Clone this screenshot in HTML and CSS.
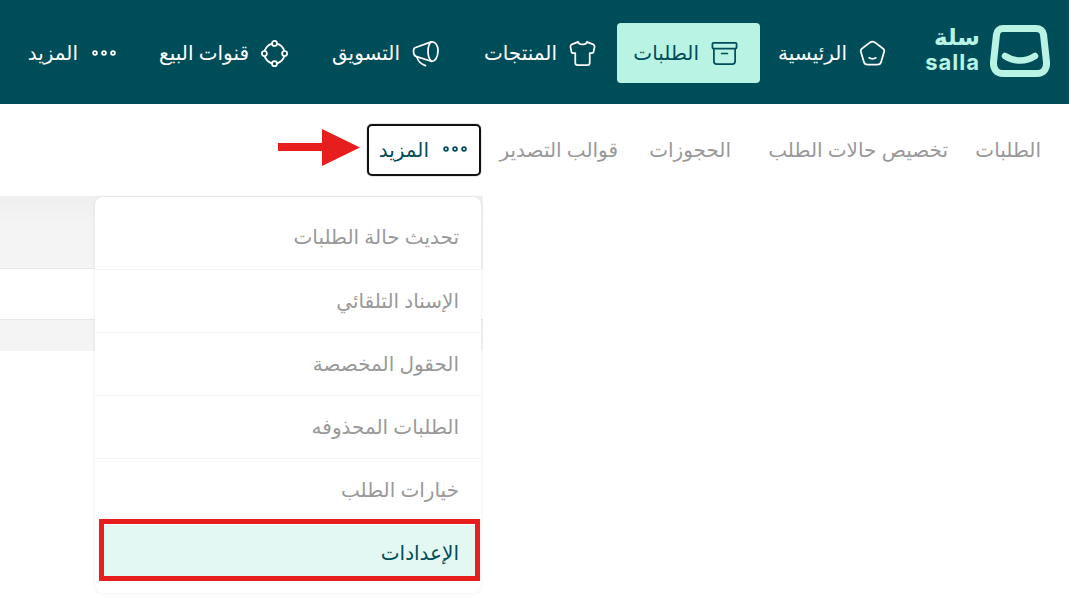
FILE: index.html
```html
<!DOCTYPE html>
<html lang="ar" dir="rtl">
<head>
<meta charset="utf-8">
<title>سلة</title>
<link rel="stylesheet" href="styles.css">
</head>
<body>
<div class="page">
  <header class="topbar">
    <a class="brand">
      <svg class="brand-mark" viewBox="0 0 62 52" width="62" height="52" fill="none" stroke="#b9f3e4" stroke-linecap="round" stroke-linejoin="round">
        <path d="M14 3.500H47C51 3.500 54 5.500 54.500 9.500L57.500 37C58 44 54.500 48.500 48 48.500H14C7.500 48.500 4 44 4.500 37L7.500 9.500C8 5.500 11 3.500 14 3.500Z" stroke-width="7"/>
        <path d="M16 31C25 37 37 37 46 31" stroke-width="6.500"/>
      </svg>
      <span class="brand-text"><span class="brand-ar">سلة</span><span class="brand-en" dir="ltr">salla</span></span>
    </a>
    <nav class="nav">
      <a class="nav-item w-home">
        <svg class="ico" viewBox="0 0 28 28" fill="none" stroke="currentColor" stroke-width="1.800" stroke-linejoin="round" stroke-linecap="round"><path d="M11.500 2.500C13 1.500 15 1.500 16.500 2.500L24.500 8.500C26 9.500 26.500 11 26 12.500L23 22.500C22.500 24.500 21 25.500 19 25.500H9C7 25.500 5.500 24.500 5 22.500L2 12.500C1.500 11 2 9.500 3.500 8.500Z"/><path d="M10.500 18.500C13 20 15 20 17.500 18.500"/></svg>
        <span>الرئيسية</span>
      </a>
      <a class="nav-item nav-active w-orders">
        <svg class="ico" viewBox="0 0 28 28" fill="none" stroke="currentColor" stroke-width="1.800" stroke-linejoin="round" stroke-linecap="round"><rect x="1.500" y="3" width="25" height="6" rx="1"/><path d="M3 9V22C3 24 4.500 25 6 25H22C23.500 25 25 24 25 22V9"/><path d="M11 14H17"/></svg>
        <span>الطلبات</span>
      </a>
      <a class="nav-item w-products">
        <svg class="ico" viewBox="0 0 28 28" fill="none" stroke="currentColor" stroke-width="1.800" stroke-linejoin="round" stroke-linecap="round"><path d="M9.500 2C10 5.500 18 5.500 18.500 2L25 4.500C26 5 26.500 6 26.500 7L25.500 12C25.500 13 24.500 13.500 23.500 13.500H21.500V23.500C21.500 25 20.500 26 19 26H9C7.500 26 6.500 25 6.500 23.500V13.500H4.500C3.500 13.500 2.500 13 2.500 12L1.500 7C1.500 6 2 5 3 4.500Z"/></svg>
        <span>المنتجات</span>
      </a>
      <a class="nav-item w-marketing">
        <svg class="ico" viewBox="0 0 28 28" fill="none" stroke="currentColor" stroke-width="1.800" stroke-linejoin="round" stroke-linecap="round"><path d="M3 8L20 2C24 1 27 6 27 11C27 17 24 23 20 22L4 17C1 16 1 9 3 8Z"/><path d="M20 2C16 5 15 17 20 22"/><path d="M5 17.500C6 21 9 25 14 26.500"/></svg>
        <span>التسويق</span>
      </a>
      <a class="nav-item w-channels">
        <svg class="ico" viewBox="0 0 28 28" fill="#004d5a" stroke="currentColor" stroke-width="1.800"><circle cx="14" cy="14" r="10.500"/><circle cx="14" cy="3.500" r="2.600"/><circle cx="24.500" cy="14" r="2.600"/><circle cx="14" cy="24.500" r="2.600"/><circle cx="3.500" cy="14" r="2.600"/></svg>
        <span>قنوات البيع</span>
      </a>
      <a class="nav-item w-more">
        <svg class="ico-dots" viewBox="0 0 24 6" fill="none" stroke="currentColor" stroke-width="1.800"><circle cx="3" cy="3" r="1.900"/><circle cx="12" cy="3" r="1.900"/><circle cx="21" cy="3" r="1.900"/></svg>
        <span>المزيد</span>
      </a>
    </nav>
  </header>

  <div class="tabs">
    <a class="tab w-t1">الطلبات</a>
    <a class="tab w-t2">تخصيص حالات الطلب</a>
    <a class="tab w-t3">الحجوزات</a>
    <a class="tab w-t4">قوالب التصدير</a>
    <a class="tab-more">
      <svg class="ico-dots" viewBox="0 0 24 6" fill="none" stroke="currentColor" stroke-width="1.800"><circle cx="3" cy="3" r="1.900"/><circle cx="12" cy="3" r="1.900"/><circle cx="21" cy="3" r="1.900"/></svg>
      <span>المزيد</span>
    </a>
    <svg class="arrow" viewBox="0 0 82 37" width="82" height="37"><path d="M0 14H44V0L82 18.500L44 37V22H0Z" fill="#e71e1e"/></svg>
  </div>

  <main class="content">
    <div class="table-bg">
      <div class="tr tr-head"></div>
      <div class="tr tr-body"></div>
      <div class="tr tr-foot"></div>
    </div>
    <div class="menu">
      <a class="menu-item menu-first">تحديث حالة الطلبات</a>
      <a class="menu-item">الإسناد التلقائي</a>
      <a class="menu-item">الحقول المخصصة</a>
      <a class="menu-item">الطلبات المحذوفه</a>
      <a class="menu-item menu-plain">خيارات الطلب</a>
      <a class="menu-item menu-active">الإعدادات</a>
      <span class="highlight"></span>
    </div>
  </main>
</div>
</body>
</html>
```
FILE: styles.css
```css
* { box-sizing: border-box; }
html, body { margin: 0; padding: 0; background: #fff; }
body { font-family: "Noto Sans", "DejaVu Sans", sans-serif; height: 598px; overflow: hidden; }
a { color: inherit; text-decoration: none; }
.page { width: 1069px; margin-right: 5px; }

.topbar {
  height: 104px;
  background: #004d5a;
  color: #fff;
  display: flex;
  align-items: center;
  padding-right: 18px;
}
.brand { display: flex; align-items: center; gap: 9px; width: 165px; flex: none; }
.brand-mark { display: block; margin-top: -2px; }
.brand-text { display: flex; flex-direction: column; color: #b9f3e4; align-items: flex-start; margin-top: -8px; }
.brand-ar { font-size: 23px; font-weight: 700; line-height: 24px; }
.brand-en { font-family: Inter, sans-serif; font-size: 22px; font-weight: 700; line-height: 22px; letter-spacing: 1px; margin-top: 3px; }

.nav { display: flex; align-items: center; flex: 1; }
.nav-item {
  display: flex;
  align-items: center;
  gap: 12px;
  height: 60px;
  font-size: 20px;
  font-weight: 500;
  white-space: nowrap;
  flex: none;
  margin-top: 2px;
}
.nav-item span { margin-top: -2px; }
.nav-active { background: #b9f3e4; color: #004d5a; border-radius: 4px; padding-right: 22px; }
.w-home { width: 126px; }
.w-orders { width: 143px; margin-left: 21px; }
.w-products { width: 157px; }
.w-marketing { width: 151px; }
.w-channels { width: 172px; }
.w-more { width: 100px; gap: 14px; }
.ico { width: 27px; height: 27px; flex: none; }
.ico-dots { width: 24px; height: 6px; flex: none; }

.tabs {
  position: relative;
  height: 92px;
  display: flex;
  align-items: center;
  padding-right: 28px;
  color: #999;
  font-size: 20px;
}
.tab { flex: none; white-space: nowrap; padding-bottom: 2px; }
.w-t1 { width: 93px; }
.w-t2 { width: 217px; }
.w-t3 { width: 113px; }
.w-t4 { width: 137px; }
.tab-more {
  display: flex;
  align-items: center;
  gap: 14px;
  width: 114px;
  height: 52px;
  padding: 0 12px 2px;
  border: 2px solid #111;
  border-radius: 5px;
  box-shadow: 0 0 1px #111;
  color: #004d5a;
  flex: none;
}
.arrow { position: absolute; left: 278px; top: 25px; }

.content { position: relative; height: 402px; }
.table-bg { width: 483px; margin-right: auto; }
.tr { border-bottom: 1px solid #e8e8e8; }
.tr-head { height: 73px; background: linear-gradient(#efefef, #f4f4f4 40%); }
.tr-body { height: 51px; background: #fff; }
.tr-foot { height: 31px; background: #f4f4f4; border-bottom: 0; }

.menu {
  position: absolute;
  left: 95px;
  top: 1px;
  width: 386px;
  height: 396px;
  background: #fff;
  border-radius: 8px;
  box-shadow: 0 0 4px rgba(0, 0, 0, .08);
  overflow: hidden;
}
.menu-item {
  display: flex;
  align-items: center;
  height: 63px;
  padding: 0 22px 2px;
  font-size: 20px;
  color: #999;
  border-bottom: 1px solid #f4f4f4;
}
.menu-first { height: 73px; padding-top: 9px; }
.menu-plain { border-bottom: 0; }
.menu-active { background: #e4f8f3; color: #004d5a; border-bottom: 0; height: 56px; margin: 3px 4px 0; padding: 0 18px 2px; }
.highlight {
  position: absolute;
  left: 4px;
  top: 322px;
  width: 381px;
  height: 62px;
  border: 5px solid #e71e1e;
}
```
